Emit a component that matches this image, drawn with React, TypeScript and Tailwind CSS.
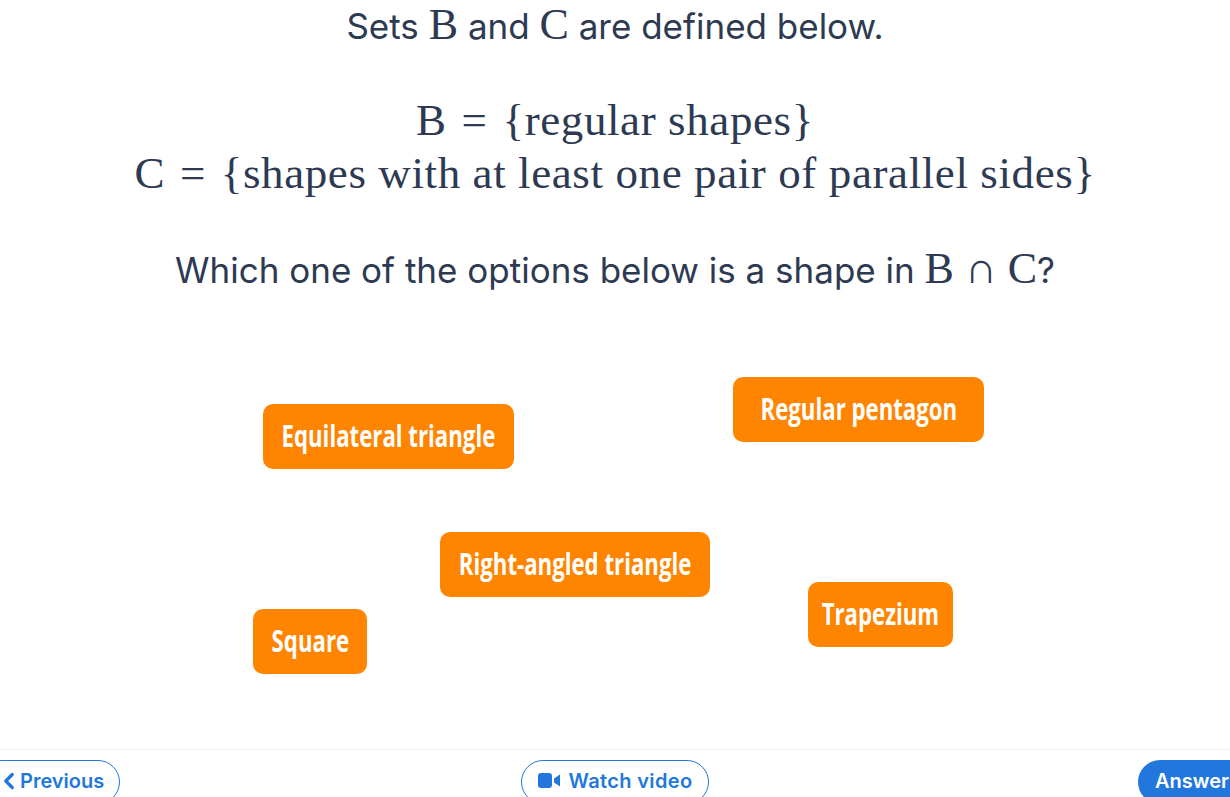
import { ChevronLeft } from "lucide-react";

const mathFont = "font-['Liberation_Serif',serif]";

const Sym = ({ children }: { children: string }) => (
  <span className={`${mathFont} text-[44px] leading-none`}>{children}</span>
);

const options = [
  { label: "Equilateral triangle", box: "left-[263px] top-[404px] w-[251px]" },
  { label: "Regular pentagon", box: "left-[733px] top-[377px] w-[251px]" },
  { label: "Right-angled triangle", box: "left-[440px] top-[532px] w-[270px]" },
  { label: "Trapezium", box: "left-[808px] top-[582px] w-[145px]" },
  { label: "Square", box: "left-[253px] top-[609px] w-[114px]" },
];

export default function App() {
  return (
    <div className="relative flex h-[797px] w-[1230px] flex-col overflow-hidden bg-white font-['Inter',sans-serif] text-[#2d3a52]">
      <div className="flex flex-col items-center">
        <p className="mt-[3px] h-[44px] text-[35px] leading-[44px]">
          Sets <Sym>B</Sym> and <Sym>C</Sym> are defined below.
        </p>
        <div className={`${mathFont} mt-[47px] flex flex-col items-center text-[45px] leading-[53px] tracking-[0.6px]`}>
          <p>
            B <span className="mx-[3px]">=</span> {"{"}regular shapes{"}"}
          </p>
          <p>
            C <span className="mx-[3px]">=</span> {"{"}shapes with at least one pair of parallel sides{"}"}
          </p>
        </div>
        <p className="mt-[47px] h-[44px] text-[35px] leading-[44px]">
          Which one of the options below is a shape in <Sym>B ∩ C</Sym>?
        </p>
      </div>

      {options.map((o) => (
        <div
          key={o.label}
          className={`absolute flex h-[65px] items-center justify-center rounded-[10px] bg-[#ff8400] pb-[3px] font-['Open_Sans',sans-serif] text-[30px] font-bold text-white ${o.box}`}
        >
          <span className="inline-block scale-x-[0.74] whitespace-nowrap">{o.label}</span>
        </div>
      ))}

      <div className="mt-auto grid h-[48px] grid-cols-3 items-start border-t border-[#eef1f7] pt-[10px] text-[20px] font-semibold text-[#2277dd]">
        <button className="-ml-[20px] flex h-[44px] w-[140px] items-center justify-self-start rounded-[22px] border border-[#2277dd] pb-[3px] pl-[15px]">
          <ChevronLeft size={26} strokeWidth={3} className="-mr-[2px]" />
          Previous
        </button>
        <button className="flex h-[44px] w-[188px] items-center justify-center gap-[8px] justify-self-center rounded-[22px] border border-[#2277dd] pb-[3px] tracking-[0.35px]">
          <svg width="23" height="15" viewBox="0 0 23 15" fill="#2277dd">
            <rect x="0" y="0" width="14" height="15" rx="3" />
            <path d="M16 5.5l6-4v12l-6-4z" />
          </svg>
          Watch video
        </button>
        <button className="-mr-[20px] flex h-[44px] w-[112px] items-center justify-self-end rounded-[22px] bg-[#2277dd] pb-[3px] pl-[17px] text-white">
          Answer
        </button>
      </div>
    </div>
  );
}
